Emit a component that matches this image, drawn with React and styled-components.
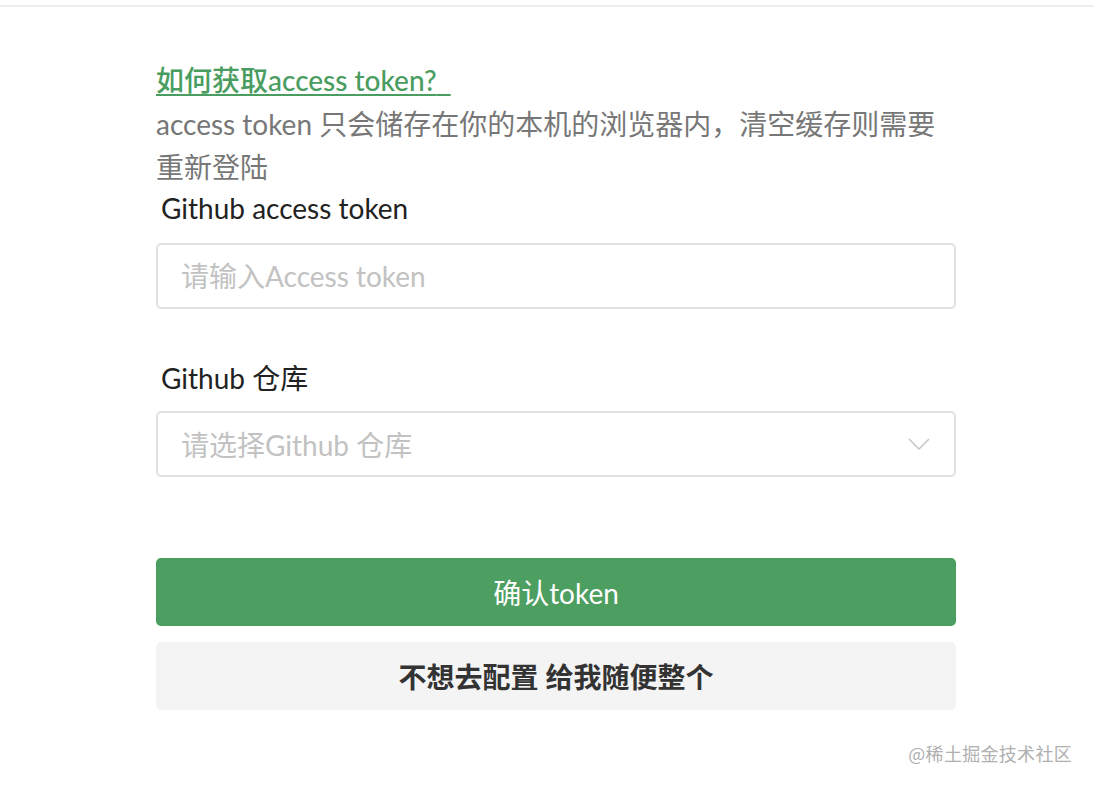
import React from "react";
import styled, { createGlobalStyle } from "styled-components";

const GlobalStyle = createGlobalStyle`
  html, body {
    margin: 0;
    padding: 0;
    background: #ffffff;
  }
  body {
    font-family: Lato, "Noto Sans CJK SC", sans-serif;
  }
  * { box-sizing: border-box; }
`;

const Page = styled.div`
  position: relative;
  width: 1094px;
  height: 786px;
  padding-top: 5px;
  overflow: hidden;
`;

const TopRule = styled.div`
  height: 2px;
  background: #eeeeee;
`;

const Form = styled.div`
  width: 800px;
  margin-left: 156px;
  padding-top: 50px;
  display: flex;
  flex-direction: column;
`;

const HelpLink = styled.a`
  display: block;
  font-size: 28px;
  line-height: 46px;
  font-weight: 500;
  color: #4a9d60;
  text-decoration: underline;
  text-decoration-thickness: 2px;
  text-underline-offset: 3px;
  cursor: pointer;
  width: fit-content;
`;

const Note = styled.p`
  margin: 0;
  font-size: 28px;
  line-height: 43px;
  color: #777777;
  width: 790px;
`;

const Label = styled.label`
  display: block;
  font-size: 28px;
  line-height: 38px;
  color: #222222;
  padding-left: 5px;
  margin-top: ${(p) => p.$top || 0}px;
`;

const fieldBox = `
  width: 800px;
  height: 66px;
  border: 2px solid #e2e2e2;
  border-radius: 5px;
  background: #ffffff;
  font-family: Lato, "Noto Sans CJK SC", sans-serif;
  font-size: 28px;
  padding: 0 0 0 23px;
`;

const TextInput = styled.input`
  ${fieldBox}
  display: block;
  margin-top: 16px;
  outline: none;
  color: #222;
  &::placeholder {
    color: #c2c2c2;
  }
`;

const SelectBox = styled.div`
  ${fieldBox}
  margin-top: 14px;
  display: flex;
  align-items: center;
  justify-content: space-between;
  padding-right: 24px;
  color: #c2c2c2;
  cursor: pointer;
`;

const Chevron = () => (
  <svg width="22" height="12" viewBox="0 0 22 12" fill="none">
    <path d="M1 1 L11 11 L21 1" stroke="#c8c8c8" strokeWidth="1.6" />
  </svg>
);

const Button = styled.button`
  width: 800px;
  height: 68px;
  border: none;
  border-radius: 5px;
  font-family: Lato, "Noto Sans CJK SC", sans-serif;
  font-size: 28px;
  font-weight: ${(p) => (p.$primary ? 400 : 600)};
  color: ${(p) => (p.$primary ? "#ffffff" : "#333333")};
  background: ${(p) => (p.$primary ? "#4c9e61" : "#f4f4f4")};
  margin-top: ${(p) => p.$top}px;
  cursor: pointer;
`;

const Watermark = styled.div`
  position: absolute;
  right: 22px;
  top: 740px;
  font-family: "Noto Sans CJK SC", sans-serif;
  font-size: 18px;
  line-height: 26px;
  color: #b0b0b0;
  letter-spacing: 0.3px;
`;

export default function App() {
  return (
    <>
      <GlobalStyle />
      <Page>
        <TopRule />
        <Form>
          <HelpLink>如何获取access token?{"\u00a0\u00a0"}</HelpLink>
          <Note>access token 只会储存在你的本机的浏览器内，清空缓存则需要重新登陆</Note>
          <Label>Github access token</Label>
          <TextInput placeholder="请输入Access token" />
          <Label $top={50}>Github 仓库</Label>
          <SelectBox>
            <span>请选择Github 仓库</span>
            <Chevron />
          </SelectBox>
          <Button $primary $top={81}>确认token</Button>
          <Button $top={16}>不想去配置 给我随便整个</Button>
        </Form>
        <Watermark>@稀土掘金技术社区</Watermark>
      </Page>
    </>
  );
}
